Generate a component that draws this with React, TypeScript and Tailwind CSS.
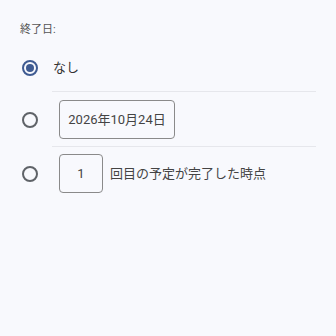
import React from 'react';

const Radio = ({ checked }: { checked?: boolean }) =>
  checked ? (
    <span className="flex h-4 w-4 shrink-0 items-center justify-center rounded-full border-2 border-[#3f5b92]">
      <span className="h-[8px] w-[8px] rounded-full bg-[#3f5b92]" />
    </span>
  ) : (
    <span className="h-4 w-4 shrink-0 rounded-full border-2 border-[#5f6368]" />
  );

export default function App() {
  return (
    <div
      className="h-[336px] w-[336px] bg-[#f8f9fd] pt-[22px] text-[#3c3c3c]"
      style={{ fontFamily: 'Roboto, "Noto Sans CJK JP", sans-serif' }}
    >
      <div className="pl-[20px] text-[11px] leading-[16px] text-[#555]">終了日:</div>

      <div className="mt-[6px]">
        <div className="flex items-center pl-[22px]">
          <Radio checked />
          <div className="ml-[14px] mr-[20px] flex h-[48px] flex-1 items-center border-b border-[#e6e7ec] pl-[1px] text-[13px] text-[#333]">
            なし
          </div>
        </div>

        <div className="flex items-center pl-[22px]">
          <Radio />
          <div className="ml-[14px] mr-[20px] flex-1 border-b border-[#e6e7ec] pb-[7px] pl-[7px] pt-[8px]">
            <div className="flex h-[39px] w-[116px] items-center justify-center rounded-[4px] border border-[#8a8a8a] text-[13px] text-[#444]">
              2026年10月24日
            </div>
          </div>
        </div>

        <div className="flex items-center pl-[22px]">
          <Radio />
          <div className="ml-[14px] mr-[20px] flex flex-1 items-center py-[7px] pl-[7px]">
            <div className="flex h-[39px] w-[44px] items-center justify-center rounded-[4px] border border-[#8a8a8a] text-[13px] text-[#444]">
              1
            </div>
            <span className="ml-[7px] text-[13px] text-[#444]">回目の予定が完了した時点</span>
          </div>
        </div>
      </div>
    </div>
  );
}
